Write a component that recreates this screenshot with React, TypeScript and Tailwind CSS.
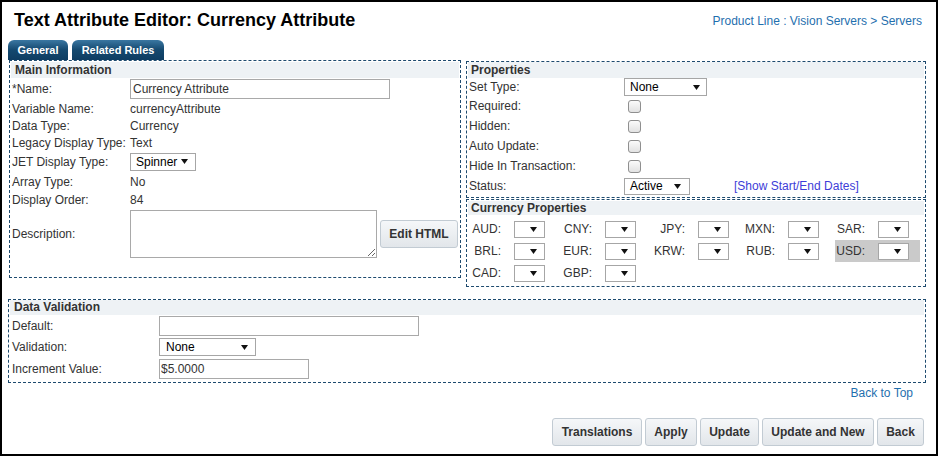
import type { ReactNode } from 'react';

const dashed = 'border border-dashed border-[#1d4a6e]';

function Arrow() {
  return (
    <svg width="7" height="5" viewBox="0 0 7 5" className="shrink-0">
      <path d="M0 0H7L3.5 5Z" fill="#111" />
    </svg>
  );
}

function Select({ value, className }: { value?: string; className: string }) {
  return (
    <div
      className={`flex items-center border border-[#a6a6a6] bg-white text-[12px] text-black ${
        value ? 'justify-between' : 'justify-end'
      } ${className}`}
    >
      {value && <span>{value}</span>}
      <Arrow />
    </div>
  );
}

function Check() {
  return <div className="ml-[4px] h-[13px] w-[13px] rounded-[3px] border border-[#8f8f8f] bg-linear-to-b from-[#fbfbfb] to-[#e2e2e2]" />;
}

function Btn({ children, className }: { children: ReactNode; className: string }) {
  return (
    <div
      className={`flex items-center justify-center rounded-[3px] border border-[#c2cbd3] bg-linear-to-b from-[#f5f7f9] to-[#e2e6ea] text-[12px] font-bold text-[#333] ${className}`}
    >
      {children}
    </div>
  );
}

function SectionHeader({ children, className }: { children: ReactNode; className: string }) {
  return <div className={`mx-px bg-[#eef2f5] pl-[3px] text-[12px] font-bold text-[#333] ${className}`}>{children}</div>;
}

function Tab({ children, className }: { children: ReactNode; className: string }) {
  return (
    <div
      className={`flex items-center justify-center rounded-t-[6px] bg-linear-to-b from-[#3a77a2] via-[#14496f] to-[#0e3d62] text-[11px] font-bold text-white ${className}`}
    >
      {children}
    </div>
  );
}

const currencies = [
  ['AUD', 'CNY', 'JPY', 'MXN', 'SAR'],
  ['BRL', 'EUR', 'KRW', 'RUB', 'USD'],
  ['CAD', 'GBP'],
];

export default function App() {
  return (
    <div className="h-[456px] w-[938px] overflow-hidden bg-white font-['Liberation_Sans',Arial,sans-serif] text-[12px] text-[#333]">
      <div className="flex h-full w-full flex-col border-2 border-black">
        {/* Title bar */}
        <div className="flex h-[38px] justify-between">
          <h1 className="pl-[12px] pt-[8px] text-[18px] font-bold leading-[21px] text-black">
            Text Attribute Editor: Currency Attribute
          </h1>
          <div className="pr-[14px] pt-[12px] leading-[14px] text-[#1f6fae]">Product Line : Vision Servers &gt; Servers</div>
        </div>

        {/* Tabs */}
        <div className="flex h-[20px] gap-[4px] pl-[6px]">
          <Tab className="w-[60px]">General</Tab>
          <Tab className="w-[92px]">Related Rules</Tab>
        </div>

        {/* Main + Properties */}
        <div className="flex pl-[7px]">
          <div className={`h-[218px] w-[452px] ${dashed}`}>
            <SectionHeader className="mt-px h-[16px] pl-[4px] leading-[16px]">Main Information</SectionHeader>
            <div className="flex h-[22px] items-center">
              <div className="w-[120px] pl-[2px]">*Name:</div>
              <input
                readOnly
                defaultValue="Currency Attribute"
                className="h-[20px] w-[260px] border border-[#a9a9a9] px-[2px] text-[12px] text-[#333] outline-none"
              />
            </div>
            <div className="flex h-[17px] items-center">
              <div className="w-[120px] pl-[2px]">Variable Name:</div>
              <div>currencyAttribute</div>
            </div>
            <div className="flex h-[17px] items-center">
              <div className="w-[120px] pl-[2px]">Data Type:</div>
              <div>Currency</div>
            </div>
            <div className="flex h-[17px] items-center">
              <div className="w-[120px] pl-[2px]">Legacy Display Type:</div>
              <div>Text</div>
            </div>
            <div className="flex h-[21px] items-center">
              <div className="w-[120px] pl-[2px]">JET Display Type:</div>
              <Select value="Spinner" className="h-[18px] w-[66px] pl-[5px] pr-[7px]" />
            </div>
            <div className="flex h-[19px] items-center">
              <div className="w-[120px] pl-[2px]">Array Type:</div>
              <div>No</div>
            </div>
            <div className="flex h-[17px] items-center">
              <div className="w-[120px] pl-[2px]">Display Order:</div>
              <div>84</div>
            </div>
            <div className="flex h-[52px] items-center">
              <div className="w-[120px] pl-[2px]">Description:</div>
              <textarea readOnly className="h-[48px] w-[247px] border border-[#a9a9a9] outline-none" />
              <Btn className="ml-[3px] h-[28px] w-[78px]">Edit HTML</Btn>
            </div>
          </div>

          <div className="ml-[5px] flex w-[460px] flex-col">
            <div className={`mt-px h-[137px] ${dashed}`}>
              <SectionHeader className="h-[16px] leading-[16px]">Properties</SectionHeader>
              <div className="flex h-[18px] items-center">
                <div className="w-[157px] pl-[2px]">Set Type:</div>
                <Select value="None" className="h-[18px] w-[83px] pl-[5px] pr-[6px]" />
              </div>
              {['Required:', 'Hidden:', 'Auto Update:', 'Hide In Transaction:'].map((l) => (
                <div key={l} className="flex h-[20px] items-center">
                  <div className="w-[157px] pl-[2px]">{l}</div>
                  <Check />
                </div>
              ))}
              <div className="flex h-[20px] items-center">
                <div className="w-[157px] pl-[2px]">Status:</div>
                <Select value="Active" className="h-[17px] w-[66px] pl-[5px] pr-[8px]" />
                <span className="ml-[44px] text-[#3d3dd8]">[Show Start/End Dates]</span>
              </div>
            </div>

            <div className={`mt-px h-[88px] ${dashed}`}>
              <SectionHeader className="mt-px h-[14px] leading-[14px]">Currency Properties</SectionHeader>
              <div className="mt-[3px] grid auto-rows-[22px] grid-cols-[42px_39px_52px_39px_54px_39px_51px_52px_38px_47px]">
                {currencies.map((row) =>
                  row.map((c) => {
                    const usd = c === 'USD';
                    return [
                      <div key={c + 'l'} className={`flex items-center justify-end pr-[8px] ${usd ? 'bg-[#cacaca]' : ''}`}>
                        {c}:
                      </div>,
                      <div key={c + 's'} className={`flex items-center pl-[5px] ${usd ? 'bg-[#cacaca]' : ''}`}>
                        <Select className="h-[17px] w-[31px] pr-[7px]" />
                      </div>,
                    ];
                  })
                )}
              </div>
            </div>
          </div>
        </div>

        {/* Data Validation */}
        <div className="pl-[6px]">
          <div className={`mt-[12px] h-[84px] w-[918px] ${dashed}`}>
            <SectionHeader className="h-[15px] pl-[4px] leading-[15px]">Data Validation</SectionHeader>
            <div className="flex h-[22px] items-center">
              <div className="w-[150px] pl-[3px]">Default:</div>
              <input readOnly className="h-[20px] w-[260px] border border-[#a9a9a9] px-[2px] outline-none" />
            </div>
            <div className="flex h-[20px] items-center">
              <div className="w-[150px] pl-[3px]">Validation:</div>
              <Select value="None" className="h-[18px] w-[97px] pl-[6px] pr-[7px]" />
            </div>
            <div className="flex h-[23px] items-center">
              <div className="w-[150px] pl-[3px]">Increment Value:</div>
              <input
                readOnly
                defaultValue="$5.0000"
                className="h-[20px] w-[150px] border border-[#a9a9a9] px-px text-[12px] text-[#333] outline-none"
              />
            </div>
          </div>
        </div>

        <div className="mt-[3px] pr-[23px] text-right leading-[14px] text-[#1f6fae]">Back to Top</div>

        {/* Action buttons */}
        <div className="mt-[18px] flex justify-end gap-[3px] pr-[12px]">
          <Btn className="h-[28px] w-[90px]">Translations</Btn>
          <Btn className="h-[28px] w-[52px]">Apply</Btn>
          <Btn className="h-[28px] w-[59px]">Update</Btn>
          <Btn className="h-[28px] w-[112px]">Update and New</Btn>
          <Btn className="h-[28px] w-[47px]">Back</Btn>
        </div>
      </div>
    </div>
  );
}
